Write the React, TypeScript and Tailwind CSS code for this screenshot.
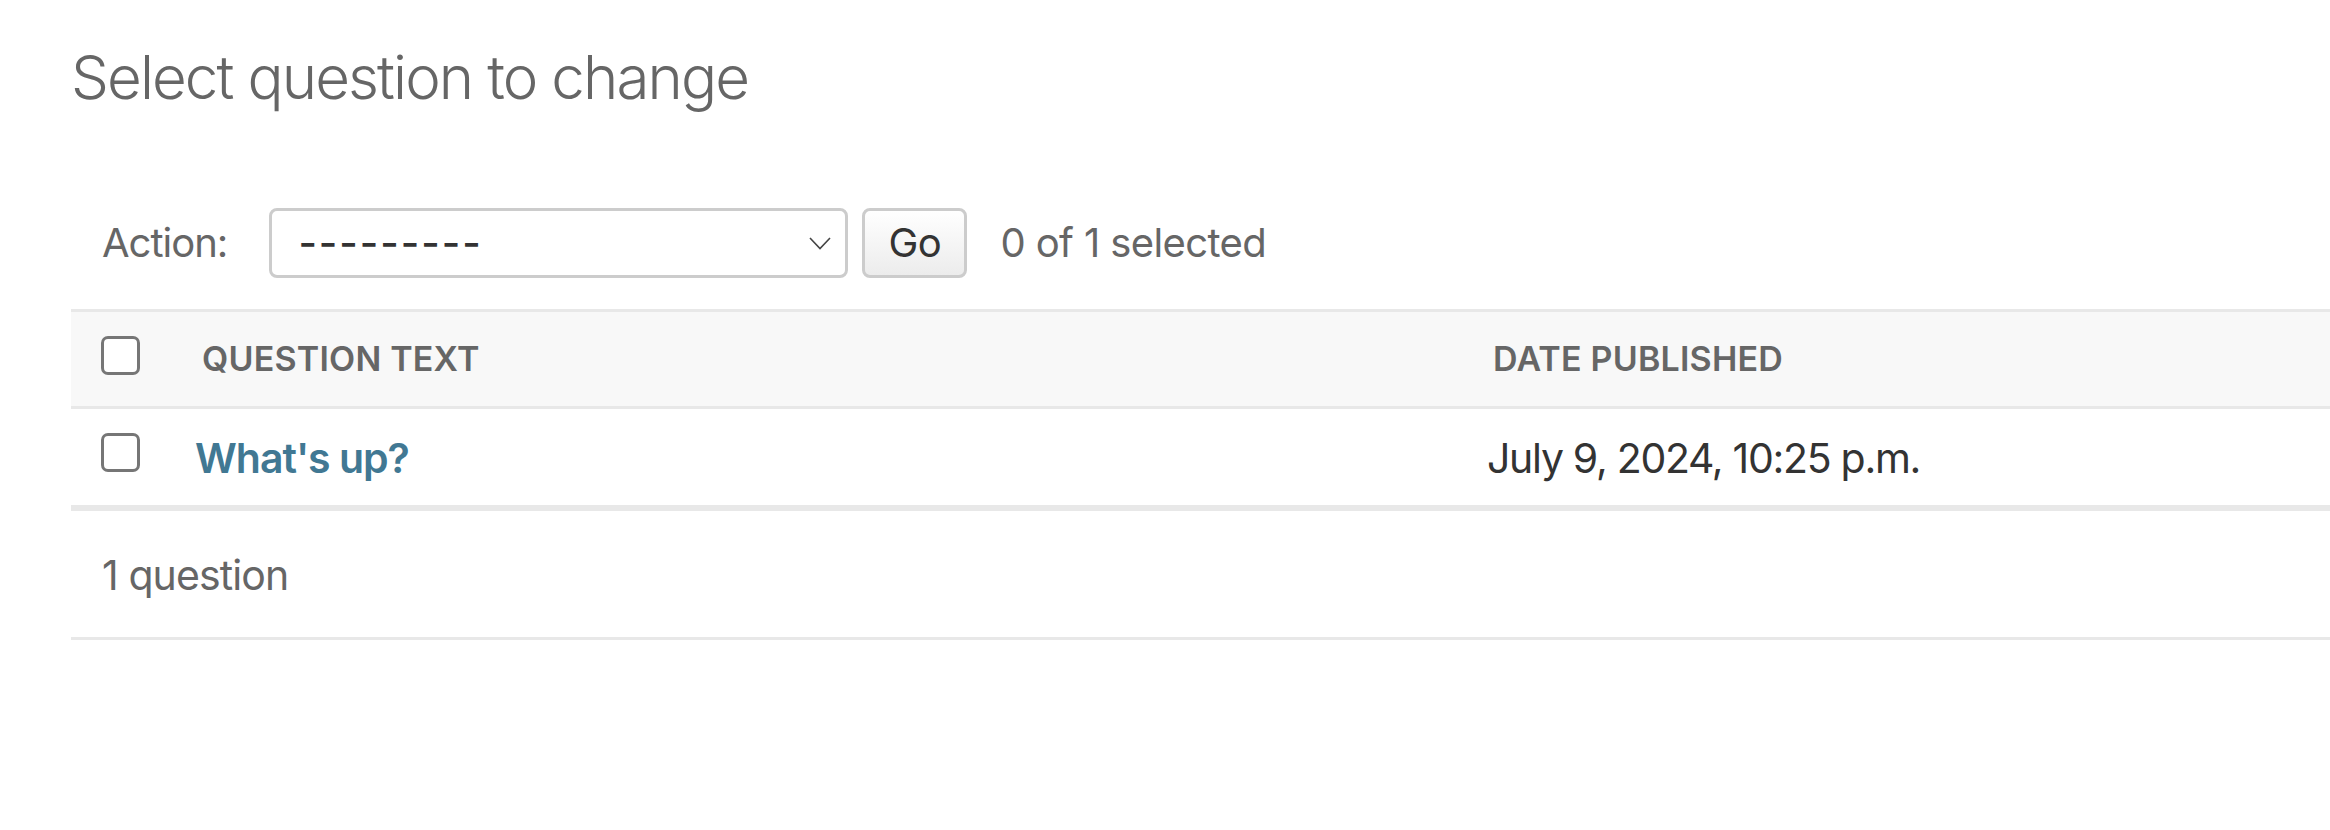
import React from "react";

const font = { fontFamily: 'Inter, "Noto Sans", sans-serif' };

function Checkbox() {
  return <span className="block h-[39px] w-[39px] rounded-[7px] border-[3px] border-[#767676] bg-white" />;
}

export default function App() {
  return (
    <div className="min-h-[830px] w-[2330px] bg-white pl-[71px]" style={font}>
      <h1 className="pt-[40px] text-[60px] font-light leading-[74px] tracking-[-1.9px] text-[#666]">Select question to change</h1>

      {/* actions */}
      <div className="mt-[94px] flex h-[70px] items-center pl-[31px]">
        <span className="text-[40px] leading-[50px] tracking-[-1px] text-[#666]">Action:</span>
        <div className="ml-[42px] flex h-[70px] w-[579px] items-center justify-between rounded-[8px] border-[3px] border-[#ccc] bg-white pl-[26px] pr-[14px]">
          <span className="text-[40px] font-medium leading-[50px] tracking-[2px] text-[#333]">---------</span>
          <svg width="22" height="13" viewBox="0 0 22 13" fill="none" stroke="#444" strokeWidth="1.6">
            <polyline points="1,1 11,11.5 21,1" />
          </svg>
        </div>
        <button className="ml-[14px] h-[70px] w-[105px] rounded-[8px] border-[3px] border-[#ccc] bg-gradient-to-b from-white to-[#ececec] text-[40px] leading-[50px] tracking-[-0.5px] text-[#333]">
          Go
        </button>
        <span className="ml-[33px] text-[40px] leading-[50px] tracking-[-0.6px] text-[#666]">0 of 1 selected</span>
      </div>

      {/* table */}
      <div className="mt-[31px]">
        <div className="flex h-[100px] border-y-[3px] border-[#e8e8e8] bg-[#f8f8f8]">
          <div className="w-[117px] pl-[30px] pt-[24px]">
            <Checkbox />
          </div>
          <div className="flex w-[1292px] items-center pl-[14px]">
            <span className="text-[34px] font-semibold leading-[40px] tracking-[0.2px] text-[#666]">QUESTION TEXT</span>
          </div>
          <div className="flex flex-1 items-center pl-[13px]">
            <span className="text-[34px] font-semibold leading-[40px] tracking-[0.2px] text-[#666]">DATE PUBLISHED</span>
          </div>
        </div>
        <div className="flex h-[102px] border-b-[6px] border-[#e8e8e8] bg-white">
          <div className="w-[117px] pl-[30px] pt-[24px]">
            <Checkbox />
          </div>
          <div className="flex w-[1292px] items-center pl-[7px] pt-[2px]">
            <a className="text-[41px] font-semibold leading-[50px] tracking-[-1px] text-[#417893]">What's up?</a>
          </div>
          <div className="flex flex-1 items-center pl-[7px] pt-[2px]">
            <span className="text-[41px] leading-[50px] tracking-[-1.3px] text-[#333]">July 9, 2024, 10:25 p.m.</span>
          </div>
        </div>
        <div className="h-[129px] border-b-[3px] border-[#e8e8e8] pl-[31px] pt-[39px]">
          <span className="text-[41px] leading-[50px] tracking-[-0.9px] text-[#666]">1 question</span>
        </div>
      </div>
    </div>
  );
}
